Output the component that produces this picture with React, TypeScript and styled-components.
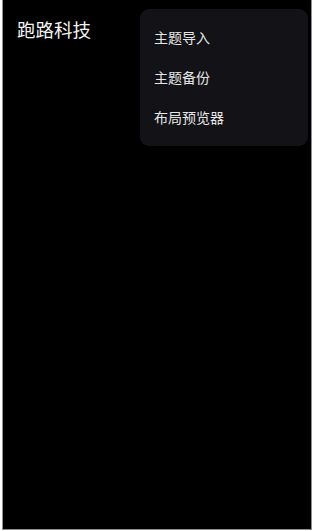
import styled, { createGlobalStyle } from 'styled-components'

const GlobalStyle = createGlobalStyle`
    html, body {
        margin: 0;
        padding: 0;
        background: #ffffff;
    }
    body {
        font-family: "Noto Sans CJK SC", "Noto Sans", sans-serif;
    }
`

const menuItems = ['主题导入', '主题备份', '布局预览器']

const App: React.FC = () => {
    return (
        <>
            <GlobalStyle />
            <Frame>
                <Header>
                    <Title>跑路科技</Title>
                </Header>
                <Menu>
                    {menuItems.map((label) => (
                        <MenuItem key={label}>{label}</MenuItem>
                    ))}
                </Menu>
            </Frame>
        </>
    )
}

export default App

const Frame = styled.div`
    position: relative;
    box-sizing: border-box;
    width: 310px;
    height: 530px;
    margin-left: 2px;
    background: #000000;
    border: 1px solid #8f8f8f;
    border-top: none;
`

const Header = styled.div`
    display: flex;
    align-items: center;
    height: 56px;
    padding: 0 14px;
`

const Title = styled.h1`
    margin: 0;
    color: #f2f2f2;
    font-size: 18.5px;
    font-weight: 400;
    line-height: 24px;
    margin-top: 1px;
`

const Menu = styled.ul`
    position: absolute;
    top: 9px;
    right: 3px;
    width: 168px;
    box-sizing: border-box;
    margin: 0;
    padding: 8px 0 9px;
    list-style: none;
    background: #131317;
    border-radius: 9px;
`

const MenuItem = styled.li`
    height: 40px;
    display: flex;
    align-items: center;
    padding-left: 14px;
    color: #e6e6e6;
    font-size: 14px;
    cursor: pointer;
`
